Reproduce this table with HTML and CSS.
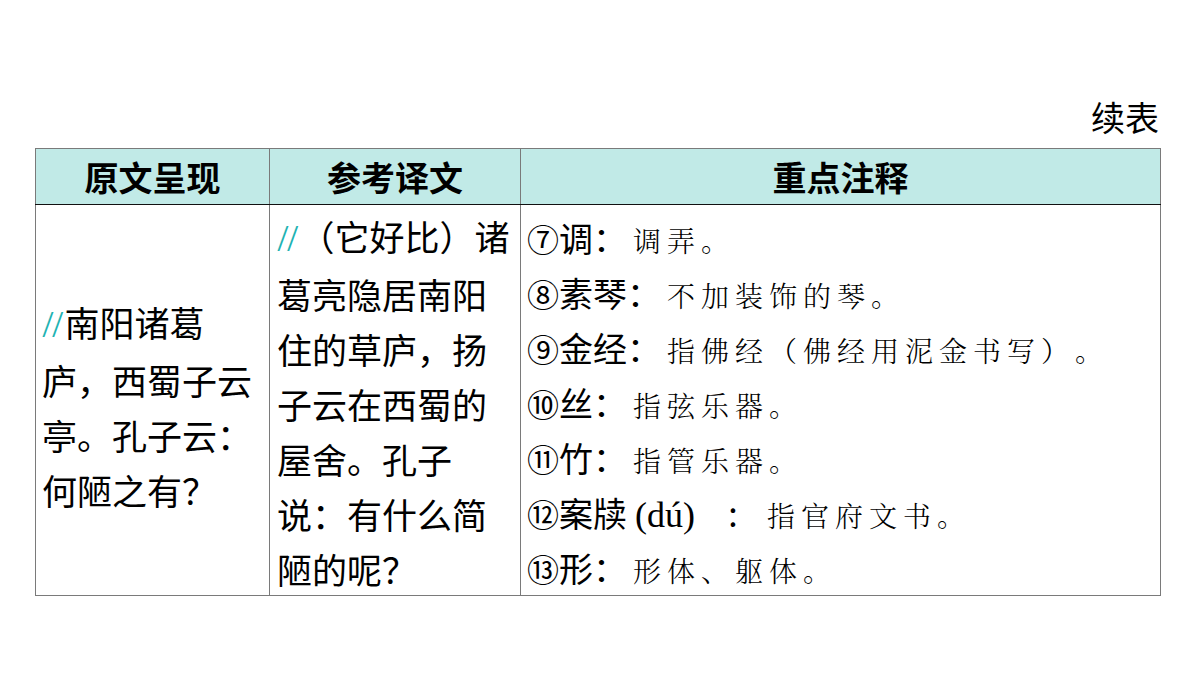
FILE: index.html
```html
<!DOCTYPE html>
<html lang="zh-CN">
<head>
<meta charset="utf-8">
<title>续表</title>
<link rel="stylesheet" href="styles.css">
</head>
<body>
<div class="page">
  <div class="caption">续表</div>
  <table class="tbl">
    <colgroup>
      <col class="c1"><col class="c2"><col class="c3">
    </colgroup>
    <thead>
      <tr>
        <th>原文呈现</th>
        <th>参考译文</th>
        <th>重点注释</th>
      </tr>
    </thead>
    <tbody>
      <tr>
        <td class="orig"><div class="cell-mid"><span class="mark">//</span>南阳诸葛<br>庐，西蜀子云<br>亭。孔子云：<br>何陋之有？</div></td>
        <td class="trans"><div class="cell-top trans-body"><span class="mark">//</span>（它好比）诸<br>葛亮隐居南阳<br>住的草庐，扬<br>子云在西蜀的<br>屋舍。孔子<br>说：有什么简<br>陋的呢？</div></td>
        <td class="notes">
          <div class="cell-top">
            <div class="note"><span class="num">⑦</span><span class="term">调：</span><span class="exp">调弄。</span></div>
            <div class="note"><span class="num">⑧</span><span class="term">素琴：</span><span class="exp">不加装饰的琴。</span></div>
            <div class="note"><span class="num">⑨</span><span class="term">金经：</span><span class="exp">指佛经（佛经用泥金书写）。</span></div>
            <div class="note"><span class="num">⑩</span><span class="term">丝：</span><span class="exp">指弦乐器。</span></div>
            <div class="note"><span class="num serif">⑪</span><span class="term">竹：</span><span class="exp">指管乐器。</span></div>
            <div class="note"><span class="num serif">⑫</span><span class="term">案牍</span><span class="pinyin">(dú)</span><span class="solo-colon">:</span><span class="exp exp-after">指官府文书。</span></div>
            <div class="note"><span class="num serif">⑬</span><span class="term">形：</span><span class="exp">形体、躯体。</span></div>
          </div>
        </td>
      </tr>
    </tbody>
  </table>
</div>
</body>
</html>
```

FILE: styles.css
```css
html, body {
  margin: 0;
  padding: 0;
  background: #ffffff;
}

body {
  font-family: "Noto Sans CJK SC", "Noto Sans", sans-serif;
  color: #000000;
  text-spacing-trim: space-all;
}

.page {
  width: 1125px;
  margin-left: 35px;
  padding-top: 96px;
}

.caption {
  text-align: right;
  font-size: 34px;
  line-height: 42px;
  height: 42px;
  margin-bottom: 10px;
  padding-right: 1px;
}

.tbl {
  width: 1125px;
  border-collapse: collapse;
  table-layout: fixed;
}

.c1 { width: 234px; }
.c2 { width: 251px; }
.c3 { width: 640px; }

.tbl th {
  background: #c1eae7;
  font-weight: 700;
  font-size: 34px;
  height: 55px;
  padding: 0;
  text-align: center;
  vertical-align: middle;
  border: 1px solid #7a7a7a;
  border-bottom: 1px solid #111111;
  line-height: 55px;
}

.tbl td {
  border: 1px solid #7a7a7a;
  padding: 0;
  font-size: 35px;
  line-height: 55px;
  height: 390px;
}

.tbl td.orig {
  vertical-align: middle;
  padding-left: 6px;
}

.tbl td.trans {
  vertical-align: top;
  padding-left: 7px;
}

.tbl td.notes {
  vertical-align: top;
  padding-left: 6px;
}

.cell-mid {
  padding-top: 10px;
}

.cell-top {
  padding-top: 4px;
  height: 386px;
}

.trans-body {
  padding-top: 3px;
}

.mark {
  color: #1fb3b3;
  font-family: "Noto Sans", "DejaVu Sans", sans-serif;
  font-weight: 300;
  font-size: 34px;
  letter-spacing: -2px;
  margin-right: 3px;
}

.note {
  height: 55px;
  line-height: 55px;
  white-space: nowrap;
}

.num {
  font-size: 32px;
}

.num.serif {
  font-family: "Liberation Serif", "Noto Sans CJK SC", serif;
}

.term {
  font-size: 34px;
}

.exp {
  font-family: "AR PL UKai CN", "Noto Serif CJK SC", "Noto Sans CJK SC", serif;
  font-size: 28px;
  letter-spacing: 6px;
  font-weight: 300;
  margin-left: 6px;
}

.pinyin {
  font-family: "Liberation Serif", serif;
  font-size: 36px;
  margin-left: 8px;
}

.solo-colon {
  display: inline-block;
  width: 40px;
  margin-left: 18px;
  text-align: center;
  font-size: 34px;
}

.exp.exp-after {
  margin-left: 14px;
}
```
